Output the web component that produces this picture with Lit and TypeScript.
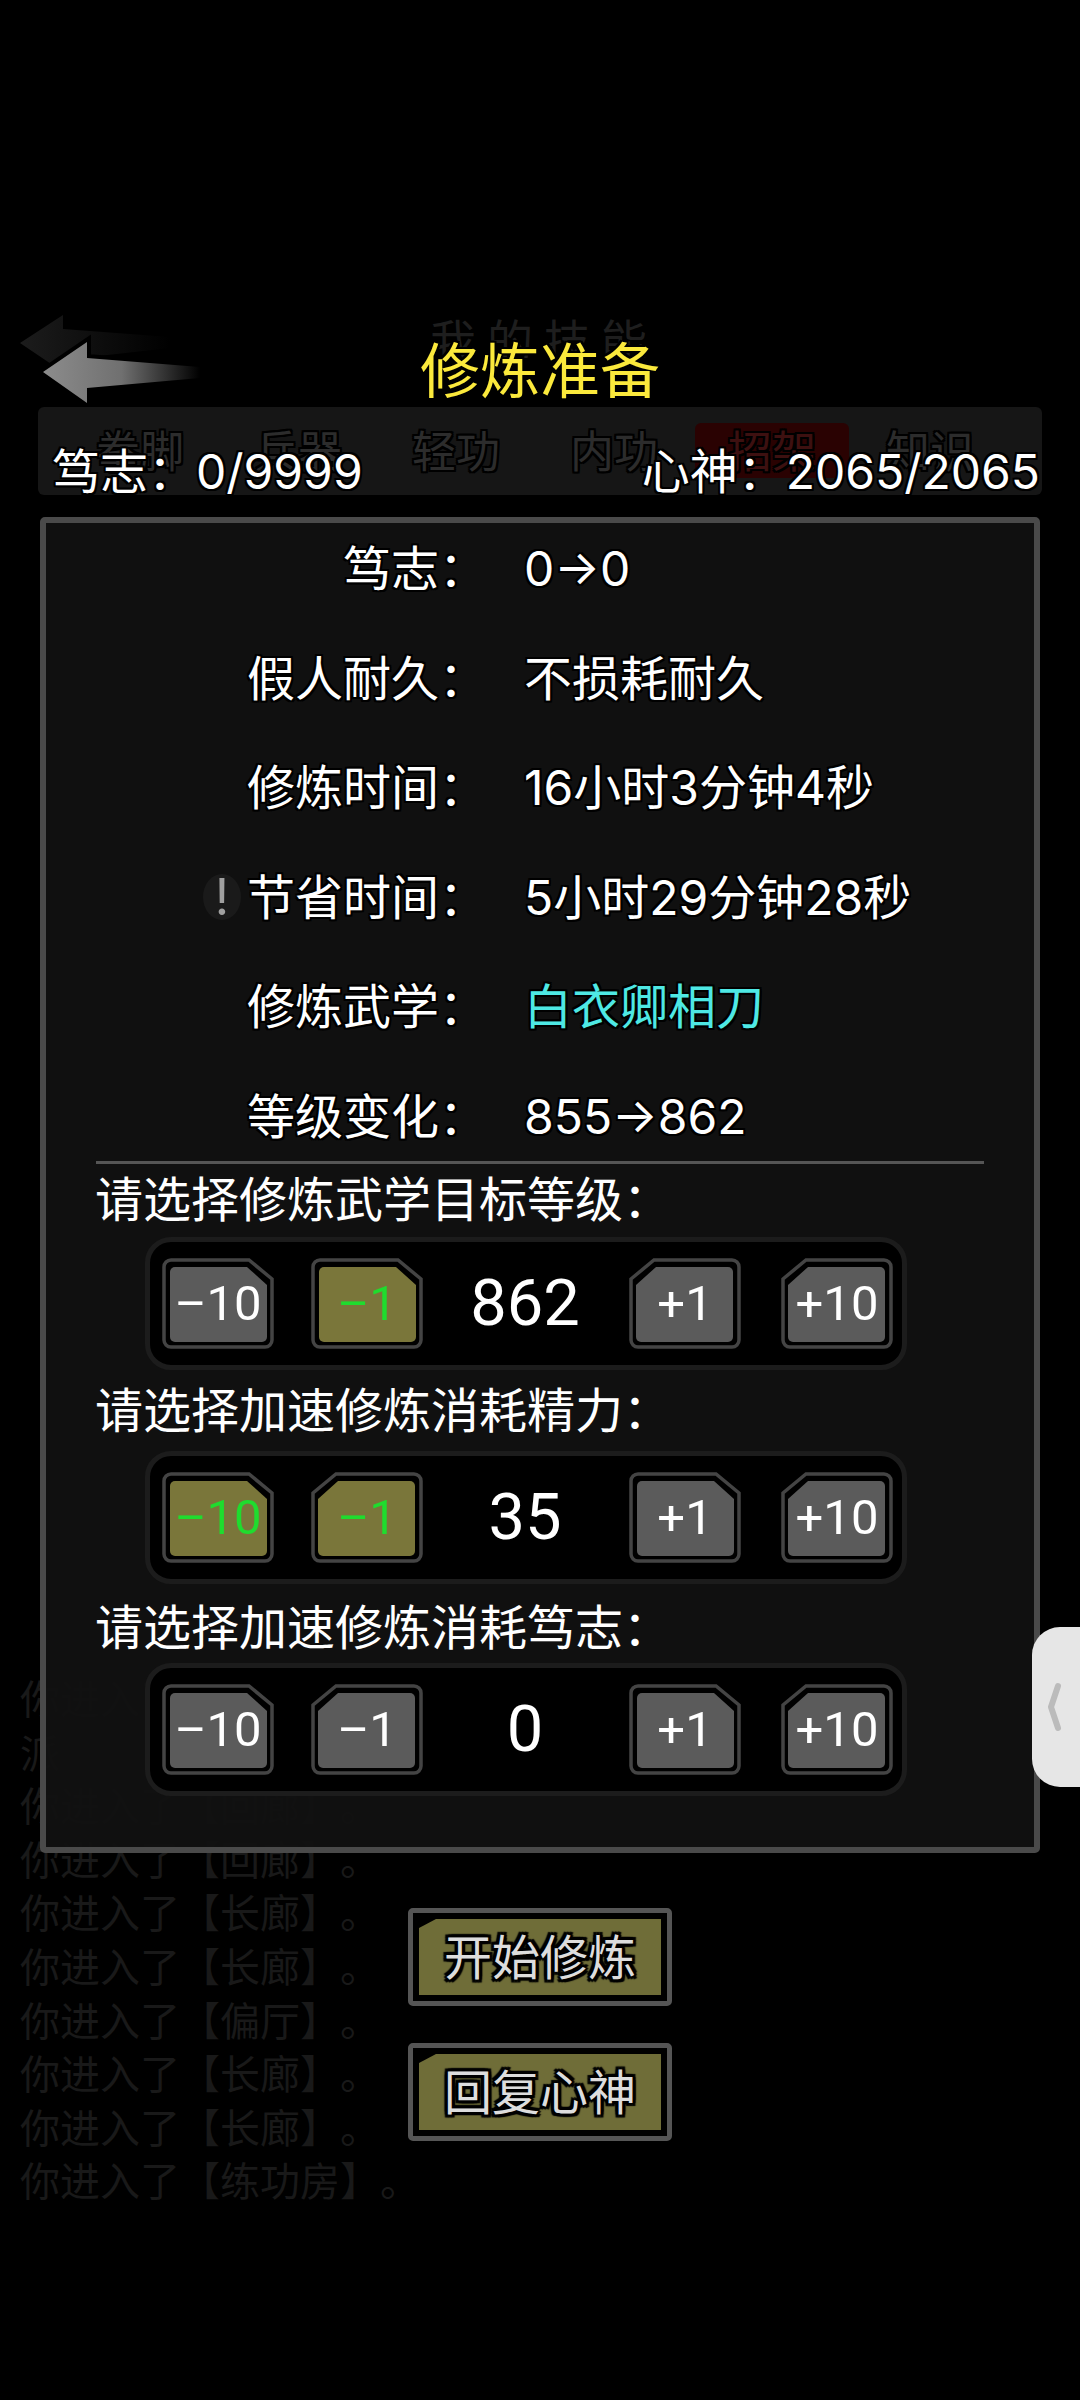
import { LitElement, html, css, svg } from 'lit';
import { customElement } from 'lit/decorators.js';
import { classMap } from 'lit/directives/class-map.js';

interface Step {
  label: string;
  active?: boolean;
  flip?: boolean;
}

interface Section {
  title: string;
  value: string;
  steps: Step[];
}

const INFO = [
  { label: '笃志：', value: '0→0' },
  { label: '假人耐久：', value: '不损耗耐久' },
  { label: '修炼时间：', value: '16小时3分钟4秒' },
  { label: '节省时间：', value: '5小时29分钟28秒', warn: true },
  { label: '修炼武学：', value: '白衣卿相刀', skill: true },
  { label: '等级变化：', value: '855→862' },
];

const SECTIONS: Section[] = [
  {
    title: '请选择修炼武学目标等级：',
    value: '862',
    steps: [
      { label: '–10' },
      { label: '–1', active: true },
      { label: '+1', flip: true },
      { label: '+10', flip: true },
    ],
  },
  {
    title: '请选择加速修炼消耗精力：',
    value: '35',
    steps: [
      { label: '–10', active: true },
      { label: '–1', active: true, flip: true },
      { label: '+1' },
      { label: '+10', flip: true },
    ],
  },
  {
    title: '请选择加速修炼消耗笃志：',
    value: '0',
    steps: [
      { label: '–10' },
      { label: '–1', flip: true },
      { label: '+1' },
      { label: '+10', flip: true },
    ],
  },
];

const TABS = ['拳脚', '兵器', '轻功', '内功', '招架', '知识'];

const LOG = ['你进入了【长廊】。', '派', '你进入了【回廊】。', '你进入了【回廊】。', '你进入了【长廊】。', '你进入了【长廊】。', '你进入了【偏厅】。', '你进入了【长廊】。', '你进入了【长廊】。', '你进入了【练功房】。'];

@customElement('app-root')
export class AppRoot extends LitElement {
  static styles = css`
    :host {
      display: block;
      position: relative;
      width: 1080px;
      height: 2400px;
      overflow: hidden;
      background: #000;
      color: #fff;
      font-family: Inter, 'Noto Sans CJK SC', sans-serif;
      font-size: 48px;
      --outline: 2px 0 0 #000, -2px 0 0 #000, 0 2px 0 #000, 0 -2px 0 #000, 2px 2px 0 #000, -2px 2px 0 #000, 2px -2px 0 #000, -2px -2px 0 #000;
      --outline-wide: 3px 0 1px #000, -3px 0 1px #000, 0 3px 1px #000, 0 -3px 1px #000, 3px 3px 1px #000, -3px 3px 1px #000, 3px -3px 1px #000, -3px -3px 1px #000;
    }
    .log {
      position: absolute;
      top: 1673px;
      left: 20px;
      font-size: 40px;
      line-height: 53.6px;
      color: #191919;
      white-space: nowrap;
      text-spacing-trim: space-all;
    }
    .back {
      position: absolute;
      left: 14px;
      top: 310px;
      width: 200px;
      height: 100px;
    }
    header {
      height: 407px;
      box-sizing: border-box;
      padding-top: 335px;
      text-align: center;
      position: relative;
    }
    .ghost-title {
      position: absolute;
      top: 312px;
      left: 430px;
      height: 46px;
      overflow: hidden;
      font-family: 'Noto Sans CJK SC', sans-serif;
      font-size: 46px;
      line-height: 52px;
      letter-spacing: 11px;
      color: #1e1e1e;
      white-space: nowrap;
    }
    h1 {
      position: relative;
      margin: 0;
      font-size: 60px;
      font-weight: 400;
      line-height: 72px;
      color: #fbe93c;
      text-shadow: var(--outline);
    }
    .stats {
      position: relative;
      margin: 0 38px;
      height: 88px;
      box-sizing: border-box;
      padding: 33px 2px 0 14px;
      display: flex;
      justify-content: space-between;
      align-items: center;
      background: #161616;
      border-radius: 6px;
      text-shadow: var(--outline);
      white-space: nowrap;
    }
    .stats span.stat {
      position: relative;
    }
    .tabs {
      position: absolute;
      inset: 16px 35px auto 25px;
      display: flex;
      justify-content: space-between;
      font-size: 44px;
      color: #2c2c2c;
    }
    .tabs span {
      width: 154px;
      text-align: center;
      border-radius: 6px;
      padding-top: 3px;
      height: 52px;
      line-height: 52px;
    }
    .tabs span.current {
      background: #2a0202;
      color: #3d1010;
    }
    .panel {
      position: relative;
      margin: 22px 40px 0;
      width: 1000px;
      height: 1336px;
      box-sizing: border-box;
      padding: 11px 50px 0;
      background: rgba(17, 17, 17, 0.94);
      border: 6px solid #4a4a4a;
      border-radius: 5px;
    }
    .info {
      display: grid;
      grid-template-columns: 391px 1fr;
      column-gap: 37px;
      row-gap: 39.6px;
      line-height: 70px;
      text-shadow: var(--outline);
    }
    .info .label {
      position: relative;
      text-align: right;
    }
    .info .value {
      white-space: nowrap;
    }
    .info .skill {
      color: #4ee8e4;
    }
    .warn {
      position: absolute;
      left: 107px;
      top: 11px;
      width: 38px;
      height: 46px;
      border-radius: 50%;
      background: #1a1a1a;
      color: #a0a0a0;
      font-size: 50px;
      line-height: 46px;
      text-align: center;
      text-shadow: none;
    }
    hr {
      margin: 9px 0 0;
      height: 3px;
      border: 0;
      background: #555;
    }
    section:nth-of-type(1) {
      margin-top: 5px;
    }
    section:nth-of-type(1) .stepper {
      margin-top: 6px;
    }
    section:nth-of-type(2) {
      margin-top: 10px;
    }
    section:nth-of-type(2) .stepper {
      margin-top: 9px;
    }
    section:nth-of-type(3) {
      margin-top: 13px;
    }
    section:nth-of-type(3) .stepper {
      margin-top: 4px;
    }
    h2 {
      margin: 0 0 0 -1px;
      font-size: 48px;
      font-weight: 400;
      line-height: 62px;
      white-space: nowrap;
    }
    .stepper {
      margin: 8px 0 0 49px;
      width: 762px;
      height: 133px;
      box-sizing: border-box;
      padding-left: 12px;
      display: flex;
      align-items: center;
      gap: 38px;
      background: #000;
      border: 5px solid #1c1c1c;
      border-radius: 26px;
      font-family: Roboto, 'Noto Sans CJK SC', sans-serif;
    }
    .stepper .num {
      width: 130px;
      box-sizing: border-box;
      padding-right: 2px;
      text-align: center;
      font-size: 65px;
    }
    button {
      padding: 0;
      border: 0;
      background: none;
      font: inherit;
      color: #fff;
    }
    .step {
      position: relative;
      flex: none;
      width: 112px;
      height: 91px;
      font-size: 49px;
      line-height: 91px;
    }
    .step:nth-child(2) {
      margin-left: -1px;
    }
    .step:last-child {
      margin-left: 2px;
    }
    .step svg {
      position: absolute;
      inset: 0;
    }
    .step.flip svg {
      transform: scaleX(-1);
    }
    .step span {
      position: relative;
      display: block;
      text-align: center;
    }
    .step.active span {
      color: #1fdc2e;
    }
    .actions {
      position: relative;
      margin-top: 55px;
      display: flex;
      flex-direction: column;
      align-items: center;
      gap: 37px;
    }
    .action {
      position: relative;
      width: 264px;
      height: 98px;
      box-sizing: border-box;
      padding-bottom: 7px;
      border: 5px solid #555;
      border-radius: 5px;
      background: #000;
      color: #ddd;
      font-size: 48px;
      text-shadow: var(--outline-wide);
    }
    .action::before {
      content: '';
      position: absolute;
      inset: 6px;
      background: #6f6d38;
      clip-path: polygon(17px 0, 100% 0, 100% 100%, 0 100%, 0 9px);
    }
    .action span {
      position: relative;
    }
    .handle {
      position: absolute;
      right: 0;
      top: 1627px;
      width: 48px;
      height: 160px;
      border-radius: 28px 0 0 28px;
      background: #e6e6e6;
    }
    .handle svg {
      position: absolute;
      left: 14px;
      top: 52px;
    }
  `;

  renderStep(step: Step) {
    const fill = step.active ? '#7a763a' : '#5b5b5b';
    return html`
      <button class=${classMap({ step: true, active: !!step.active, flip: !!step.flip })}>
        <svg width="112" height="91" viewBox="0 0 112 91">
          ${svg`<path d="M9 2H87L110 21V82a7 7 0 0 1-7 7H9a7 7 0 0 1-7-7V9a7 7 0 0 1 7-7Z" fill="#000" stroke="#444" stroke-width="3.5"/>`}
          ${svg`<path d="M13 9H85L105 27V79a5 5 0 0 1-5 5H13a5 5 0 0 1-5-5V14a5 5 0 0 1 5-5Z" fill=${fill}/>`}
        </svg>
        <span>${step.label}</span>
      </button>
    `;
  }

  render() {
    return html`
      <div class="log">${LOG.map((line) => html`<div>${line}</div>`)}</div>
      <header>
        <div class="ghost-title">我的技能</div>
        <h1>修炼准备</h1>
      </header>
      <svg class="back" viewBox="0 0 200 100">
        <defs>
          <linearGradient id="shaft" x1="0" x2="1" y1="0" y2="0">
            <stop offset="0" stop-color="#8c8c8c"></stop>
            <stop offset="0.5" stop-color="#707070"></stop>
            <stop offset="1" stop-color="#000"></stop>
          </linearGradient>
          <linearGradient id="ghost" x1="0" x2="1" y1="0" y2="0">
            <stop offset="0" stop-color="#1c1c1c"></stop>
            <stop offset="1" stop-color="#000"></stop>
          </linearGradient>
        </defs>
        <path d="M6 33L49 5V19L156 27V38L49 50V62Z" fill="url(#ghost)"></path>
        <path d="M29 62L73 32V48L186 57V68L73 78V93Z" fill="url(#shaft)" stroke="#000" stroke-width="8" paint-order="stroke"></path>
      </svg>
      <div class="stats">
        <div class="tabs">
          ${TABS.map((tab, i) => html`<span class=${classMap({ current: i === 4 })}>${tab}</span>`)}
        </div>
        <span class="stat">笃志：0/9999</span>
        <span class="stat">心神：2065/2065</span>
      </div>
      <div class="panel">
        <div class="info">
          ${INFO.map(
            (row) => html`
              <div class="label">
                ${row.warn ? html`<span class="warn">!</span>` : ''}${row.label}
              </div>
              <div class=${classMap({ value: true, skill: !!row.skill })}>${row.value}</div>
            `,
          )}
        </div>
        <hr />
        ${SECTIONS.map(
          (sec) => html`
            <section>
              <h2>${sec.title}</h2>
              <div class="stepper">
                ${this.renderStep(sec.steps[0])}
                ${this.renderStep(sec.steps[1])}
                <div class="num">${sec.value}</div>
                ${this.renderStep(sec.steps[2])}
                ${this.renderStep(sec.steps[3])}
              </div>
            </section>
          `,
        )}
      </div>
      <div class="actions">
        <button class="action"><span>开始修炼</span></button>
        <button class="action"><span>回复心神</span></button>
      </div>
      <div class="handle">
        <svg width="20" height="56" viewBox="0 0 20 56">
          <path d="M12 7L5 28L12 49" fill="none" stroke="#bbb" stroke-width="6" stroke-linecap="round" stroke-linejoin="round"></path>
        </svg>
      </div>
    `;
  }
}
